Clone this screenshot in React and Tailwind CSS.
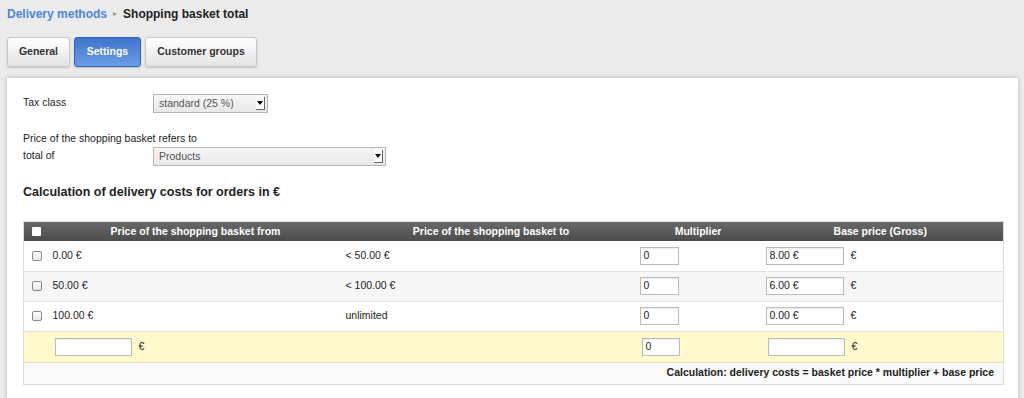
const rows = [
  { from: '0.00 €', to: '< 50.00 €', mult: '0', base: '8.00 €' },
  { from: '50.00 €', to: '< 100.00 €', mult: '0', base: '6.00 €' },
  { from: '100.00 €', to: 'unlimited', mult: '0', base: '0.00 €' },
];

const SelectBox = ({ value, width }) => (
  <div
    className={`flex h-[19px] items-center justify-between border border-[#b5b5b5] bg-gradient-to-b from-[#f6f6f6] to-[#e8e8e8] pl-[5px] pr-[2px] text-[10.5px] text-[#555] ${width}`}
  >
    <span>{value}</span>
    <span className="flex h-[13px] w-[9px] items-center justify-center border-r border-b border-[#666] bg-white">
      <span className="mt-[-1px] block h-0 w-0 border-x-[3px] border-t-[4px] border-x-transparent border-t-black" />
    </span>
  </div>
);

const Check = ({ header }) => (
  <span
    className={
      header
        ? 'block h-[9px] w-[9px] rounded-[1px] bg-white'
        : 'block h-[10px] w-[10px] rounded-[2px] border border-[#8a8a8a] bg-gradient-to-b from-white to-[#e6e6e6]'
    }
  />
);

const TextBox = ({ value, width }) => (
  <div
    className={`flex h-[18px] items-center border border-[#bbb] bg-white px-[3px] text-[10.5px] text-[#222] shadow-[inset_0_1px_1px_rgba(0,0,0,0.08)] ${width}`}
  >
    {value}
  </div>
);

export default function App() {
  return (
    <div className="min-h-screen bg-[#ebebeb] font-['Liberation_Sans',Arial,sans-serif] text-[10.5px] text-[#222]">
      <div className="flex h-[27px] items-center px-[7px] text-[12px] font-bold">
        <span className="text-[#4a86e0]">Delivery methods</span>
        <span className="mx-[6px] text-[8px] font-normal text-[#999]">▸</span>
        <span className="text-[#222]">Shopping basket total</span>
      </div>

      <div className="mt-[10px] flex gap-[4px] px-[7px]">
        <button className="h-[30px] w-[63px] rounded-[3px] border border-[#c8c8c8] bg-gradient-to-b from-white to-[#e4e4e4] text-[10.5px] font-bold text-[#333] shadow-[0_1px_2px_rgba(0,0,0,0.15)]">
          General
        </button>
        <button className="h-[30px] w-[67px] rounded-[3px] border border-[#2f64b8] bg-gradient-to-b from-[#3f74cc] to-[#6a9de4] text-[10.5px] font-bold text-white shadow-[0_1px_2px_rgba(0,0,0,0.2)]">
          Settings
        </button>
        <button className="h-[30px] w-[112px] rounded-[3px] border border-[#c8c8c8] bg-gradient-to-b from-white to-[#e4e4e4] text-[10.5px] font-bold text-[#333] shadow-[0_1px_2px_rgba(0,0,0,0.15)]">
          Customer groups
        </button>
      </div>

      <div className="mt-[11px] ml-[7px] mr-[6px] min-h-[330px] bg-white px-[16px] pt-[16px] pb-[20px] shadow-[0_0_4px_rgba(0,0,0,0.25)]">
        <div className="flex items-start">
          <div className="w-[130px] pt-[1px]">Tax class</div>
          <SelectBox value="standard (25 %)" width="w-[115px]" />
        </div>

        <div className="mt-[17px] leading-[17px]">Price of the shopping basket refers to</div>
        <div className="flex items-start">
          <div className="w-[130px] leading-[17px]">total of</div>
          <SelectBox value="Products" width="w-[233px]" />
        </div>

        <h2 className="mt-[17px] text-[12.5px] font-bold text-[#222]">
          Calculation of delivery costs for orders in €
        </h2>

        <table className="mt-[19px] w-[980px] table-fixed border-collapse border border-[#dcdcdc]">
          <colgroup>
            <col className="w-[24px]" />
            <col className="w-[296px]" />
            <col className="w-[295px]" />
            <col className="w-[119px]" />
            <col className="w-[246px]" />
          </colgroup>
          <thead>
            <tr className="h-[20px] bg-gradient-to-b from-[#6a6a6a] to-[#4c4c4c] text-[10.5px] font-bold text-white">
              <th className="pl-[8px] text-left">
                <Check header />
              </th>
              <th className="text-center">Price of the shopping basket from</th>
              <th className="text-center">Price of the shopping basket to</th>
              <th className="text-center">Multiplier</th>
              <th className="text-center">Base price (Gross)</th>
            </tr>
          </thead>
          <tbody>
            {rows.map((row, i) => (
              <tr
                key={i}
                className={`h-[30px] border-b border-[#e2e2e2] ${i === 1 ? 'bg-[#f6f6f6]' : 'bg-white'}`}
              >
                <td className="pl-[8px]">
                  <Check />
                </td>
                <td className="pl-[5px]">{row.from}</td>
                <td className="pl-[2px]">{row.to}</td>
                <td className="pl-[1px]">
                  <TextBox value={row.mult} width="w-[39px]" />
                </td>
                <td className="pl-[8px]">
                  <div className="flex items-center gap-[7px]">
                    <TextBox value={row.base} width="w-[78px]" />
                    <span>€</span>
                  </div>
                </td>
              </tr>
            ))}
            <tr className="h-[31px] border-b border-[#e6e1b8] bg-[#fff9cc]">
              <td />
              <td className="pl-[7px]">
                <div className="flex items-center gap-[7px]">
                  <TextBox value="" width="w-[77px]" />
                  <span>€</span>
                </div>
              </td>
              <td />
              <td className="pl-[3px]">
                <TextBox value="0" width="w-[38px]" />
              </td>
              <td className="pl-[10px]">
                <div className="flex items-center gap-[7px]">
                  <TextBox value="" width="w-[77px]" />
                  <span>€</span>
                </div>
              </td>
            </tr>
            <tr className="h-[22px] bg-[#f9f9f9]">
              <td colSpan={5} className="pr-[9px] text-right font-bold">
                Calculation: delivery costs = basket price * multiplier + base price
              </td>
            </tr>
          </tbody>
        </table>
      </div>
    </div>
  );
}
